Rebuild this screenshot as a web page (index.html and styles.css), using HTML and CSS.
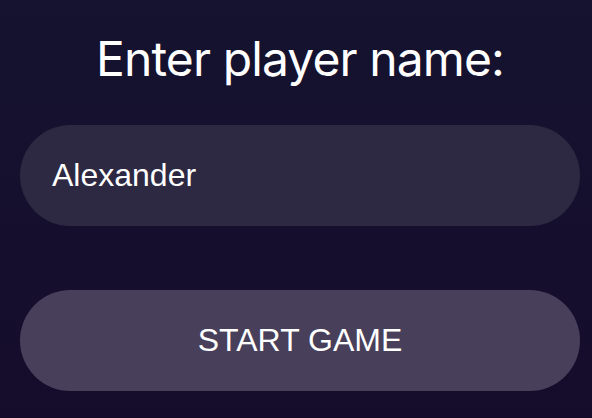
FILE: index.html
```html
<!DOCTYPE html>
<html lang="en">
<head>
<meta charset="utf-8">
<title>Enter player name</title>
<link rel="stylesheet" href="styles.css">
</head>
<body>
<main class="screen">
  <h1 class="title">Enter player name:</h1>
  <div class="name-field">Alexander</div>
  <button class="start-btn" type="button">START GAME</button>
</main>
</body>
</html>
```
FILE: styles.css
```css
html, body {
  margin: 0;
  padding: 0;
  height: 100%;
}
body {
  background: linear-gradient(180deg, #15132f 0%, #150f2d 60%, #150c2b 100%);
  color: #ffffff;
}
.screen {
  display: flex;
  flex-direction: column;
  padding: 0 12px 0 20px;
  box-sizing: border-box;
  width: 592px;
}
.title {
  margin: 28px 0 0 0;
  font-family: Inter, "Noto Sans", sans-serif;
  font-weight: 400;
  font-size: 48px;
  line-height: 62px;
  letter-spacing: -0.9px;
  text-align: center;
}
.name-field {
  margin-top: 35px;
  height: 101px;
  border-radius: 51px;
  background: #2d2942;
  display: flex;
  align-items: center;
  padding-left: 32px;
  font-family: "Liberation Sans", Arial, sans-serif;
  font-size: 32px;
  color: #ffffff;
}
.start-btn {
  margin-top: 64px;
  height: 101px;
  border: none;
  border-radius: 51px;
  background: #48405a;
  color: #ffffff;
  font-family: "Liberation Sans", Arial, sans-serif;
  font-size: 32px;
  padding: 0;
}
```
